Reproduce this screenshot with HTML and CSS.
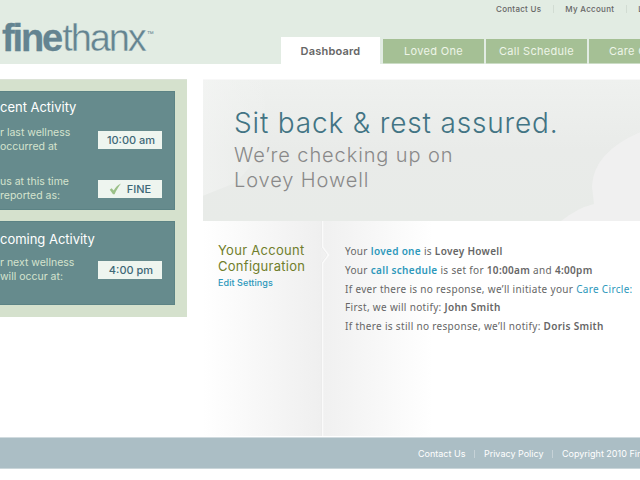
FILE: index.html
```
<!DOCTYPE html>
<html lang="en">
<head>
<meta charset="utf-8">
<title>finethanx</title>
<link rel="stylesheet" href="styles.css">
</head>
<body>
<header class="header">
  <div class="logo"><b>fine</b><span class="thanx">thanx</span><span class="tm">™</span></div>
  <div class="navigation">
    <div class="utility"><a>Contact Us</a><i></i><a>My Account</a><i></i><a>Logout</a></div>
    <nav class="tabs"><a class="tab active">Dashboard</a><a class="tab">Loved One</a><a class="tab">Call Schedule</a><a class="tab">Care Circle</a></nav>
  </div>
</header>
<main class="main">
  <aside class="sidebar">
    <section class="panel recent">
      <h2>cent Activity</h2>
      <div class="row"><p>r last wellness<br>occurred at</p><div class="value">10:00 am</div></div>
      <div class="row second"><p>us at this time<br>reported as:</p><div class="value"><svg width="13" height="12" viewBox="0 0 13 12"><path d="M.8 6.800 2.600 5.200 4.700 7.600C6.500 4.500 8.800 2 12 .6 9.400 3.900 7.300 7.500 5.600 11.200L4 11.200Z" fill="#9bc088"/></svg>FINE</div></div>
    </section>
    <section class="panel upcoming">
      <h2>coming Activity</h2>
      <div class="row"><p>r next wellness<br>will occur at:</p><div class="value">4:00 pm</div></div>
    </section>
  </aside>
  <div class="content">
    <section class="hero">
      <svg class="backdrop" viewBox="0 0 437 140" preserveAspectRatio="none"><defs><linearGradient id="fade"><stop offset="0" stop-color="#f5f6f5"/><stop offset="1" stop-color="#f0f2f0" stop-opacity=".3"/></linearGradient></defs><path d="M0 0H60Q70 75 30 103L0 115Z" fill="url(#fade)" opacity=".6"/><path d="M437 52Q390 72 389 106L391 123Q374 127 358 140H437Z" fill="#f0f0f0"/></svg>
      <h1>Sit back &amp; rest assured.</h1>
      <p class="checking">We’re checking up on</p>
      <p class="person">Lovey Howell</p>
    </section>
    <section class="account">
      <div class="config">
        <h3>Your Account</h3><h3>Configuration</h3><a class="edit">Edit Settings</a>
        <svg class="divider" width="10" height="215" viewBox="0 0 10 215"><path d="M1.500 0V26L7.500 34 1.500 42V215" fill="none" stroke="#e7e7e7"/><path d="M2.500 0V26L8.500 34 2.500 42V215" fill="none" stroke="#fafafa" stroke-width="1.500"/></svg>
      </div>
      <div class="details">
        <p>Your <a>loved one</a> is <b>Lovey Howell</b></p>
        <p>Your <a>call schedule</a> is set for <b>10:00am</b> and <b>4:00pm</b></p>
        <p>If ever there is no response, we’ll initiate your <a class="plain">Care Circle:</a></p>
        <p>First, we will notify: <b>John Smith</b></p>
        <p>If there is still no response, we’ll notify: <b>Doris Smith</b></p>
      </div>
    </section>
  </div>
</main>
<footer class="footer"><a>Contact Us</a><i></i><a>Privacy Policy</a><i></i><a>Copyright 2010 FineThanx</a></footer>
</body>
</html>
```
FILE: styles.css
```
* { box-sizing: border-box; }
body { margin: 0; width: 640px; height: 480px; overflow: hidden; background: #fff; color: #666; font-family: Inter, "Liberation Sans", sans-serif; }
h1, h2, h3, p { margin: 0; font-weight: 400; white-space: nowrap; }
a, i { white-space: nowrap; flex-shrink: 0; }
.header { height: 64px; background: #e2ece3; display: flex; }
.logo { width: 281px; padding: 16px 0 0 2px; display: flex; align-items: flex-start; font: 38px/44px "Liberation Sans", sans-serif; color: #648491; letter-spacing: -2.1px; flex-shrink: 0; }
.logo b { -webkit-text-stroke: .3px #648491; }
.thanx { margin-left: 1px; -webkit-text-stroke: .4px #e2ece3; }
.tm { font-size: 7px; line-height: 8px; letter-spacing: 0; margin: 14px 0 0 2px; }
.navigation { width: 359px; overflow: hidden; }
.utility { height: 37px; padding: 4px 0 0 215px; display: flex; font-size: 8px; line-height: 11px; font-weight: 500; letter-spacing: .28px; }
.utility i { width: 1px; height: 8px; margin: 1px 11.500px 0; background: #d2dcd3; }
.tabs { display: flex; gap: 2px; height: 27px; align-items: flex-end; }
.tab { width: 101px; height: 25px; border-bottom: 1px solid #cbdcc5; background: #a5c095; color: #eef5e8; font-size: 11px; line-height: 25px; text-align: center; letter-spacing: .3px; }
.tab.active { width: 99px; margin-right: 1px; height: 27px; border: 0; line-height: 28px; background: #fff; color: #666; font-weight: 600; letter-spacing: .2px; }
.main { height: 373px; display: flex; padding-top: 15px; }
.sidebar { width: 187px; height: 238px; background: #d5e1cd; border-top: 1px solid #dce3d7; padding: 11px 12px 12px 0; flex-shrink: 0; }
.panel { background: #668b8d; border: 1px solid #5c8385; border-left: 0; color: #fff; padding-right: 12px; }
.recent { height: 119px; }
.upcoming { height: 84px; margin-top: 11px; }
.panel h2 { font-size: 13px; line-height: 18px; padding-top: 6px; letter-spacing: -.02px; }
.upcoming h2 { padding-top: 8px; }
.row { display: flex; justify-content: space-between; align-items: center; height: 28px; margin-top: 10px; }
.row p { font-size: 10.500px; line-height: 14px; color: #d5e3cd; padding-bottom: 1px; }
.row.second { margin-top: 21px; }
.upcoming .row { margin-top: 8px; }
.upcoming .row p { padding-bottom: 0; }
.value { width: 64px; height: 18px; background: #eef5ef; color: #3e6877; font-size: 11px; font-weight: 500; display: flex; justify-content: center; align-items: center; gap: 5px; padding-left: 2px; }
.recent .second .value { padding-left: 0; }
.content { width: 437px; margin-left: 16px; flex-shrink: 0; }
.hero { height: 142px; padding: 27px 0 0 31px; background: linear-gradient(#eff1ef, #e9ebe9 50%, #e8ebe8); border-top: 1px solid #f8f8f8; position: relative; }
.backdrop { position: absolute; inset: 0; width: 100%; height: 100%; }
.hero h1, .hero p { position: relative; }
.hero h1 { font-size: 28px; line-height: 32px; font-weight: 300; color: #427484; letter-spacing: .83px; }
.hero p { font-size: 20px; line-height: 25px; font-weight: 300; color: #898989; letter-spacing: .9px; }
.hero .checking { margin-top: 4px; }
.account { display: flex; height: 215px; }
.config { width: 118px; padding: 21px 0 0 15px; background: linear-gradient(90deg, #fff, #efefef); position: relative; flex-shrink: 0; }
.config h3 { color: #707e2b; font-size: 13px; line-height: 16px; letter-spacing: .28px; }
.edit { display: block; margin-top: 3px; font-size: 9px; line-height: 11px; color: #2d98bb; font-weight: 500; letter-spacing: .08px; }
.divider { position: absolute; left: 117px; top: 0; }
.details { flex: 1; padding: 21px 0 0 24px; background: linear-gradient(90deg, #f0f0f0, #fff 112px); font-family: "Noto Sans", sans-serif; font-size: 10px; line-height: 18.800px; letter-spacing: .32px; }
.details a { color: #2d98bb; font-weight: 600; }
.details a.plain { font-weight: 400; }
.details b { font-weight: 600; }
.footer { height: 32px; background: #abbec5; border-top: 1px solid #d1dbdf; border-bottom: 1px solid #cad6da; padding: 1px 0 0 418px; display: flex; align-items: center; color: #fff; font-size: 9px; }
.footer i { width: 1px; height: 8px; margin: 0 8.500px 0 9px; background: #c6d2d7; }
```
